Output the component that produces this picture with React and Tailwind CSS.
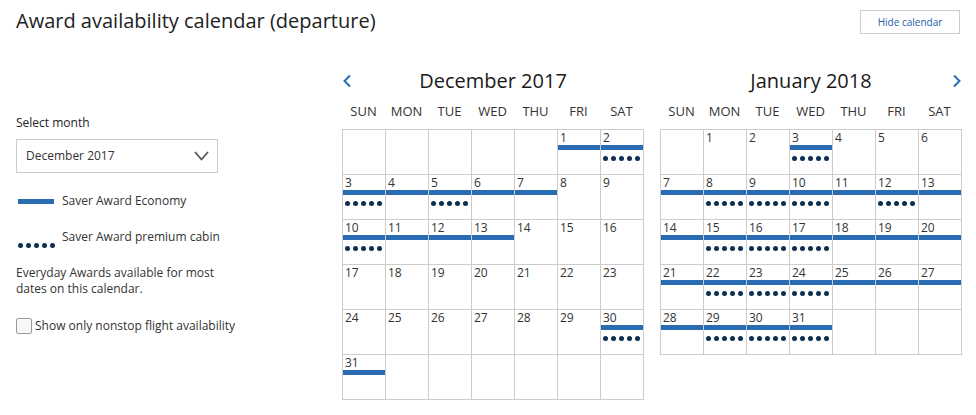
import React from "react";

const B = "b"; // bar
const D = "d"; // bar + dots

const dec = [
  [null, null, null, null, null, [1, B], [2, D]],
  [[3, D], [4, B], [5, D], [6, B], [7, B], [8], [9]],
  [[10, D], [11, B], [12, B], [13, B], [14], [15], [16]],
  [[17], [18], [19], [20], [21], [22], [23]],
  [[24], [25], [26], [27], [28], [29], [30, D]],
  [[31, B], null, null, null, null, null, null],
];

const jan = [
  [null, [1], [2], [3, D], [4], [5], [6]],
  [[7, B], [8, D], [9, D], [10, D], [11, B], [12, D], [13, B]],
  [[14, B], [15, D], [16, D], [17, D], [18, B], [19, B], [20, B]],
  [[21, B], [22, D], [23, D], [24, D], [25, B], [26, B], [27, B]],
  [[28, B], [29, D], [30, D], [31, D], null, null, null],
];

const days = ["SUN", "MON", "TUE", "WED", "THU", "FRI", "SAT"];

function Dots() {
  return (
    <div className="flex gap-[3px] shrink-0">
      {[0, 1, 2, 3, 4].map((i) => (
        <span key={i} className="block shrink-0 w-[5px] h-[5px] rounded-full bg-[#0c2f52]" />
      ))}
    </div>
  );
}

function Cell({ c }) {
  return (
    <div className="w-[43px] h-[45px] border-r border-b border-[#cccccc] relative">
      {c && (
        <>
          <div className="pl-[2px] pt-[1px] text-[12px] leading-[14px] text-[#333]">{c[0]}</div>
          {c[1] && <div className="absolute left-0 right-0 top-[15px] h-[5px] bg-[#2a6cb1]" />}
          {c[1] === D && (
            <div className="absolute left-[2px] top-[26px]">
              <Dots />
            </div>
          )}
        </>
      )}
    </div>
  );
}

function Chevron({ dir }) {
  return (
    <svg width="10" height="14" viewBox="0 0 10 14" fill="none">
      {dir === "left" ? (
        <path d="M8 1.5 L2.5 7 L8 12.5" stroke="#2a6cb1" strokeWidth="2" />
      ) : (
        <path d="M2 1.5 L7.5 7 L2 12.5" stroke="#2a6cb1" strokeWidth="2" />
      )}
    </svg>
  );
}

function Calendar({ title, rows, arrow }) {
  return (
    <div className="w-[302px] flex flex-col">
      <div className="h-[30px] flex items-center justify-between relative">
        <div className="w-[12px] flex">{arrow === "left" && <Chevron dir="left" />}</div>
        <div className="text-[20px] leading-[30px] text-[#1a1a1a]">{title}</div>
        <div className="w-[12px] flex justify-end">{arrow === "right" && <Chevron dir="right" />}</div>
      </div>
      <div className="h-[33px] flex items-center pb-[1px]">
        {days.map((d) => (
          <div key={d} className="w-[43px] text-center text-[13px] text-[#333]">
            {d}
          </div>
        ))}
      </div>
      <div className="border-l border-t border-[#cccccc] w-[302px]">
        {rows.map((r, i) => (
          <div key={i} className="flex">
            {r.map((c, j) => (
              <Cell key={j} c={c} />
            ))}
          </div>
        ))}
      </div>
    </div>
  );
}

export default function App() {
  return (
    <div
      className="w-[976px] h-[415px] bg-white text-[#333] overflow-hidden"
      style={{ fontFamily: '"Open Sans", "Liberation Sans", sans-serif' }}
    >
      <div className="h-[66px] flex justify-between px-4">
        <h1 className="text-[20px] leading-[30px] pt-[6px] text-[#222] font-normal whitespace-nowrap">
          Award availability calendar (departure)
        </h1>
        <button className="mt-[10px] w-[100px] h-[24px] border border-[#cccccc] text-[10px] text-[#2360a8] bg-white">
          Hide calendar
        </button>
      </div>
      <div className="flex">
        <div className="ml-4 w-[202px] shrink-0 flex flex-col whitespace-nowrap">
          <div className="mt-[49px] text-[12px] leading-[16px] text-[#222]">Select month</div>
          <div className="mt-[8px] h-[34px] border border-[#cccccc] flex items-center justify-between pl-[9px] pr-[8px]">
            <span className="text-[12px] text-[#333]">December 2017</span>
            <svg width="15" height="10" viewBox="0 0 15 10" fill="none">
              <path d="M1 1 L7.5 8.5 L14 1" stroke="#555" strokeWidth="1.8" />
            </svg>
          </div>
          <div className="mt-[20px] flex items-center h-[16px]">
            <span className="ml-[2px] w-[36px] h-[5px] bg-[#2a6cb1] shrink-0" />
            <span className="ml-[8px] text-[12px] leading-[16px] text-[#333]">Saver Award Economy</span>
          </div>
          <div className="mt-[20px] flex items-start h-[22px]">
            <span className="ml-[2px] w-[37px] mt-[14px] shrink-0">
              <Dots />
            </span>
            <span className="ml-[7px] text-[12px] leading-[16px] text-[#333]">Saver Award premium cabin</span>
          </div>
          <div className="mt-[14px] text-[12px] leading-[16px] text-[#333]">
            Everyday Awards available for most
            <br />
            dates on this calendar.
          </div>
          <div className="mt-[21px] flex items-center">
            <span className="w-[16px] h-[16px] border border-[#999] rounded-[2px] bg-[#f7f7f7] shrink-0" />
            <span className="ml-[3px] text-[12px] leading-[16px] text-[#333]">
              Show only nonstop flight availability
            </span>
          </div>
        </div>
        <div className="ml-[124px] flex gap-[16px]">
          <Calendar title="December 2017" rows={dec} arrow="left" />
          <Calendar title="January 2018" rows={jan} arrow="right" />
        </div>
      </div>
    </div>
  );
}
